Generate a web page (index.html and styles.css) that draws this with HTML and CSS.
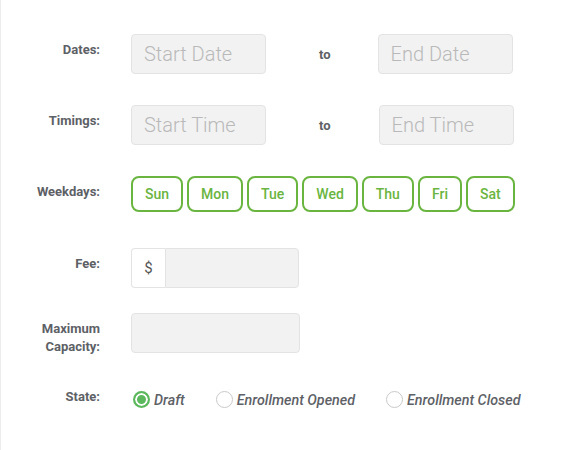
FILE: index.html
```html
<!DOCTYPE html>
<html>
<head>
<meta charset="utf-8">
<link rel="stylesheet" href="styles.css">
</head>
<body>
<div class="page">
  <form class="form">
    <div class="row gap-31">
      <div class="label">Dates:</div>
      <div class="control range">
        <div class="input"><span class="ph">Start Date</span></div>
        <span class="to">to</span>
        <div class="input"><span class="ph">End Date</span></div>
      </div>
    </div>
    <div class="row gap-31">
      <div class="label">Timings:</div>
      <div class="control range">
        <div class="input"><span class="ph">Start Time</span></div>
        <span class="to">to</span>
        <div class="input shift"><span class="ph">End Time</span></div>
      </div>
    </div>
    <div class="row gap-36">
      <div class="label">Weekdays:</div>
      <div class="control days">
        <button type="button" class="day">Sun</button>
        <button type="button" class="day">Mon</button>
        <button type="button" class="day">Tue</button>
        <button type="button" class="day">Wed</button>
        <button type="button" class="day">Thu</button>
        <button type="button" class="day">Fri</button>
        <button type="button" class="day">Sat</button>
      </div>
    </div>
    <div class="row gap-25">
      <div class="label">Fee:</div>
      <div class="control">
        <div class="group">
          <span class="addon">$</span>
          <div class="field"></div>
        </div>
      </div>
    </div>
    <div class="row gap-25">
      <div class="label">Maximum<br>Capacity:</div>
      <div class="control">
        <div class="input wide"></div>
      </div>
    </div>
    <div class="row">
      <div class="label">State:</div>
      <div class="control radios">
        <label class="radio"><span class="dot checked"></span><span class="rtext">Draft</span></label>
        <label class="radio"><span class="dot"></span><span class="rtext">Enrollment Opened</span></label>
        <label class="radio"><span class="dot"></span><span class="rtext">Enrollment Closed</span></label>
      </div>
    </div>
  </form>
</div>
</body>
</html>
```

FILE: styles.css
```css
html, body {
  margin: 0;
  padding: 0;
  background: #fff;
}
body {
  font-family: Roboto, "Liberation Sans", Arial, sans-serif;
}
.page {
  min-height: 450px;
  box-sizing: border-box;
  border-left: 1px solid #ececec;
  padding-top: 34px;
}
.form {
  display: flex;
  flex-direction: column;
}
.row {
  display: flex;
  align-items: flex-start;
}
.gap-31 { margin-bottom: 31px; }
.gap-36 { margin-bottom: 36px; }
.gap-25 { margin-bottom: 25px; }
.label {
  width: 99px;
  flex: none;
  text-align: right;
  font-size: 13px;
  font-weight: 700;
  line-height: 18px;
  padding-top: 7px;
  color: #5d6166;
}
.control {
  margin-left: 31px;
}
.range {
  display: flex;
  align-items: center;
}
.input {
  box-sizing: border-box;
  width: 135px;
  height: 40px;
  background: #f2f2f2;
  border: 1px solid #e3e3e3;
  border-radius: 4px;
  padding-left: 12px;
  display: flex;
  align-items: center;
}
.input.shift { margin-left: 1px; }
.input.wide { width: 169px; }
.ph {
  font-size: 20px;
  font-weight: 300;
  color: #b9b9b9;
  white-space: nowrap;
}
.to {
  font-size: 13px;
  font-weight: 700;
  color: #5d6166;
  margin: 0 47px 0 53px;
}
.days {
  display: flex;
  gap: 4px;
}
.day {
  box-sizing: border-box;
  height: 36px;
  padding: 0 12px;
  background: #fff;
  border: 2px solid #6ab540;
  border-radius: 8px;
  color: #6ab540;
  font-family: Roboto, "Liberation Sans", Arial, sans-serif;
  font-size: 14px;
  font-weight: 500;
}
.group {
  display: flex;
  width: 168px;
  height: 40px;
}
.addon {
  box-sizing: border-box;
  width: 34px;
  border: 1px solid #e3e3e3;
  border-right: none;
  border-radius: 4px 0 0 4px;
  background: #fff;
  color: #555;
  font-size: 15px;
  display: flex;
  align-items: center;
  justify-content: center;
}
.field {
  flex: 1;
  background: #f2f2f2;
  border: 1px solid #e3e3e3;
  border-radius: 0 4px 4px 0;
}
.radios {
  display: flex;
  gap: 31px;
  padding-top: 10px;
  margin-left: 33px;
}
.radio {
  display: flex;
  align-items: center;
  gap: 4px;
}
.dot {
  box-sizing: border-box;
  width: 17px;
  height: 17px;
  border-radius: 50%;
  border: 1px solid #c9c9c9;
  background: #fff;
}
.dot.checked {
  border: 2px solid #5cb85c;
  background: #5cb85c;
  box-shadow: inset 0 0 0 2px #fff;
}
.rtext {
  font-size: 14.3px;
  font-weight: 500;
  font-style: italic;
  color: #5d6166;
  padding-top: 1px;
}
```
